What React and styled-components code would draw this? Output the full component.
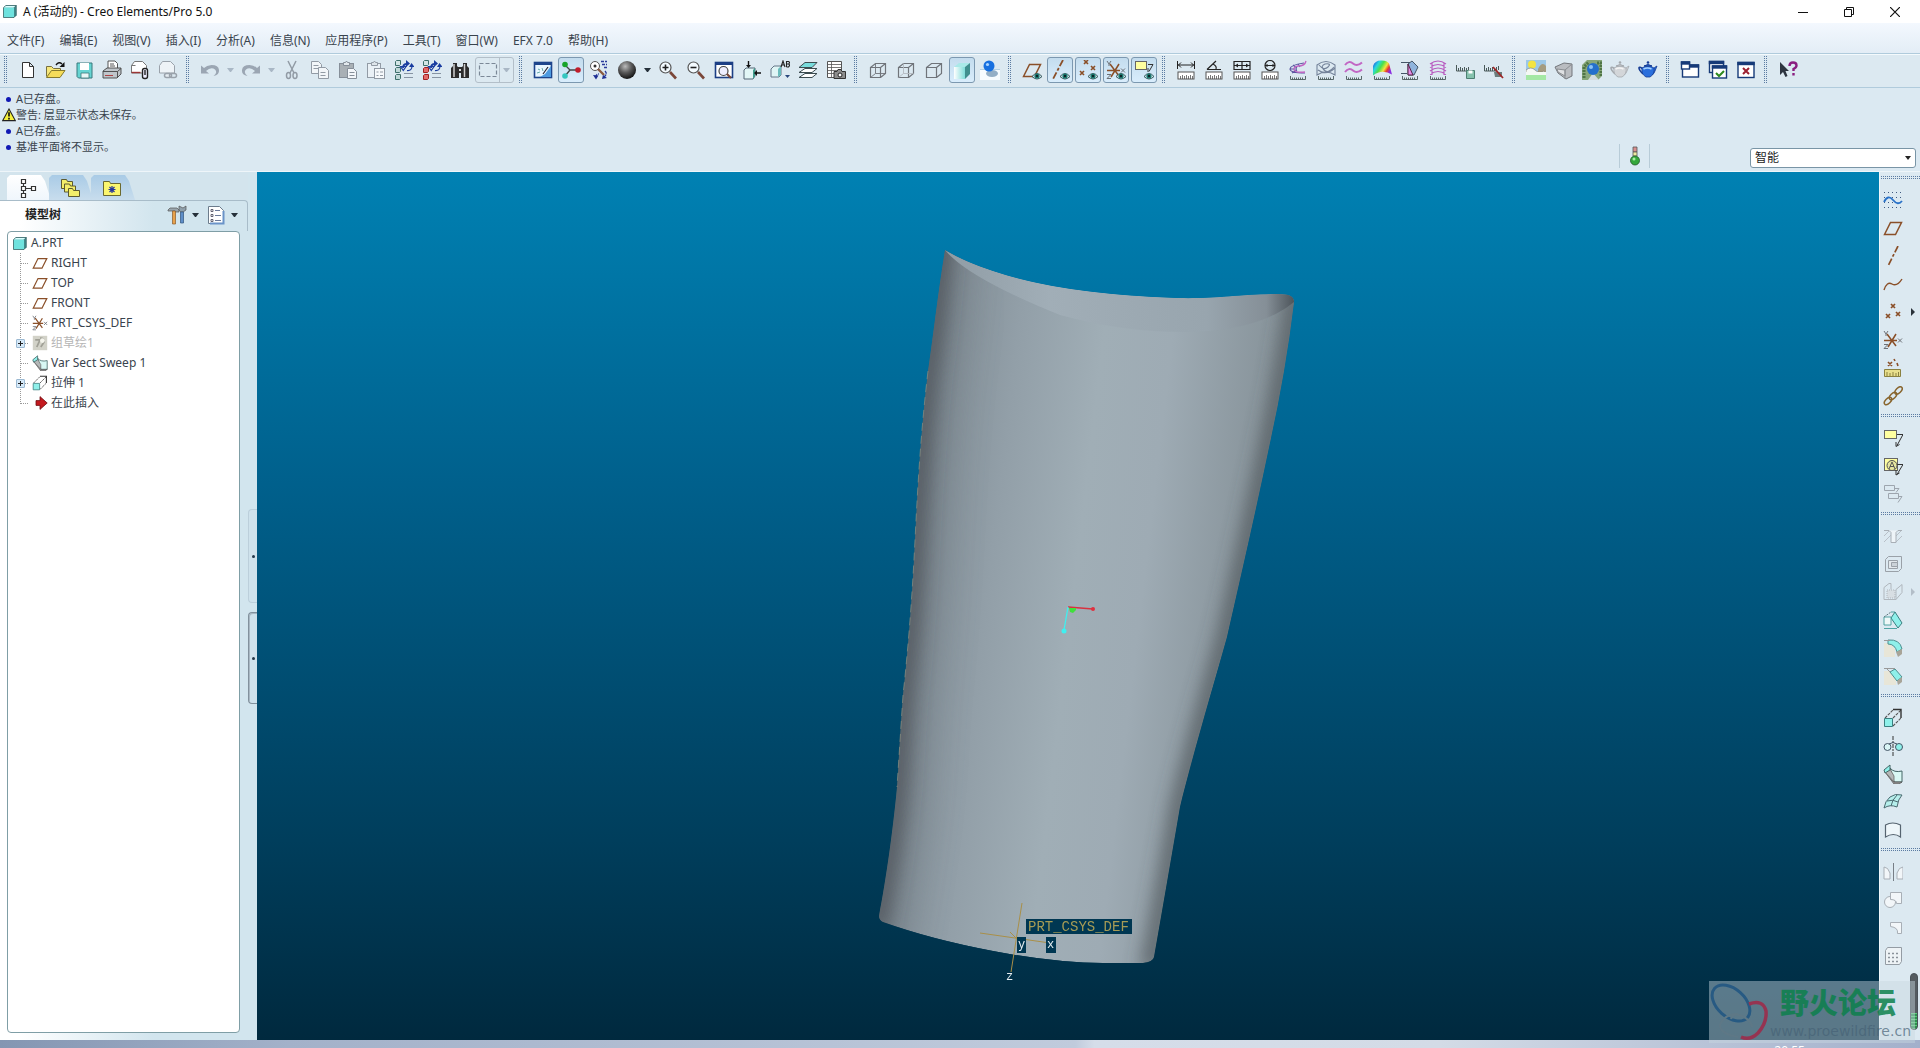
import React from "react";
import styled, { createGlobalStyle, css } from "styled-components";

const GlobalStyle = createGlobalStyle`
  * { box-sizing: border-box; }
  body {
    margin: 0;
    overflow: hidden;
    font: 12px/16px "Noto Sans", "Noto Sans CJK SC", sans-serif;
    color: #39434d;
    background: #dbe9f2;
  }
  button { font: inherit; color: inherit; }
`;

const BROWN = "#8a4f28";
const AQUA = "#8ff0ea";

const ruler = (
  <>
    <rect x="2" y="12" width="16" height="7" fill="#fff" stroke="#555" />
    <path d="M4.5 16v3M6.5 15v4M8.5 16v3M10.5 15v4M12.5 16v3M14.5 15v4M16.5 16v3" stroke="#555" strokeWidth=".8" />
  </>
);

const thinRuler = (
  <path d="M2.5 16v3.5h15V16M4.5 17.5v2M6.5 17.5v2M8.5 17.5v2M10.5 17.5v2M12.5 17.5v2M14.5 17.5v2" stroke="#4a5a5a" strokeWidth=".9" fill="none" />
);

const eye = (
  <g>
    <path d="M10 16.5q5-6 10 0q-5 5-10 0z" fill="#cfe4ea" stroke="#26484c" strokeWidth=".9" />
    <circle cx="15" cy="16" r="2.6" fill="#1c7a70" />
    <circle cx="15" cy="16" r="1.2" fill="#0d2226" />
  </g>
);

const cubeFrame = (color, inner) => (
  <g fill="none" stroke={color} strokeWidth="1.2">
    <path d="M2.5 7.5h10v10h-10zM2.5 7.5l5-4h10v10l-5 4M12.5 7.5l5-4" />
    {inner && <path d="M7.5 3.5v10h10M7.5 13.5l-5 4" stroke={inner} strokeWidth=".9" />}
  </g>
);

const treeList = (color) => (
  <g>
    {[0, 7, 14].map((y, i) => (
      <g key={y}>
        <path d={`M1.5 ${y + 1.5}l1-1h4v4l-1 1h-4z`} fill={i ? color : "#d3e6e6"} stroke={i && color === "#e26a6a" ? "#a02020" : "#3d6f6b"} />
      </g>
    ))}
    <path d="M10 13.5h9M10 17.5h9" stroke="#8794a3" strokeWidth="1.2" />
    <path d="M9 8q0-4 4-4" stroke="#1a3da0" strokeWidth="1.8" fill="none" />
    <path d="M12 0l4 3.5-4 3.500zM15 7l2.5-4 3 4z" fill="#1a3da0" />
    <path d="M6.5 6.500h5.500l-2.700 4zM18 6q0 5-5 4.500" stroke="#1a3da0" strokeWidth="1.2" fill="none" />
  </g>
);

const lens = (sign) => (
  <g>
    <path d="M12 12l6 6.5" stroke="#7a4638" strokeWidth="2.6" />
    <circle cx="7.5" cy="7.5" r="5.5" fill="#f4fbff" stroke="#555" strokeWidth="1.2" />
    <path d={sign} stroke="#222" strokeWidth="1.6" />
  </g>
);

const teapot = (fill, line, shine) => (
  <g>
    <path d="M5 9q-4-3-4-1t4 6" fill="none" stroke={line} strokeWidth="1.6" />
    <path d="M15 10q1-3 4-4l-2 5q-1 3-3 4z" fill={fill} stroke={line} strokeWidth=".8" />
    <path d="M4 8q6-4 12 0q1 6-4 9H8Q3 14 4 8z" fill={fill} stroke={line} strokeWidth=".8" />
    <path d="M6 6q4-3 8 0z" fill={fill} stroke={line} />
    <circle cx="10" cy="2.5" r="1.3" fill={line} />
    <path d="M5.5 9q4-2 8 0" stroke={shine} strokeWidth="1.5" fill="none" />
  </g>
);

const windowBox = (x, y, w, h) => (
  <g>
    <rect x={x} y={y} width={w} height={h} fill="#fff" stroke="#163a78" strokeWidth="1.4" />
    <rect x={x - 0.7} y={y - 0.7} width={w + 1.4} height="3.4" fill="#163a78" />
  </g>
);

const csys = (
  <g stroke={BROWN} strokeWidth="1.5" fill="none">
    <path d="M1 10.5h13M4 4l9 12M13 4L5 17" />
    <path d="M1 1l2 3 2-3M3 4v2M15 8.5l4 4M19 8.5l-4 4M1 14.5h4l-4 4h4" stroke="#6c7076" strokeWidth="1" />
  </g>
);

const note = (
  <g>
    <rect x="1.5" y="2.5" width="12" height="8" fill="#ffffa0" stroke="#666" />
    <path d="M14 6.5h6l-6 11M13 14v4.5l3.5-2" stroke="#333" fill="none" />
  </g>
);

const plane = <path d="M1.5 16.5l6-12h11l-6 12z" fill="none" stroke={BROWN} strokeWidth="1.5" />;

const ICONS = {
  app: (
    <g>
      <path d="M2 5l3-3h14v13l-3 3z" fill="#3f8a8b" />
      <path d="M2 5l3-3h14l-3 3z" fill="#d9ffff" />
      <path d="M2 5h14v13H2z" fill="#6fe2de" />
      <path d="M2 5l3-3h14v13l-3 3H2zM16 5l3-3" fill="none" stroke="#2c5a5c" strokeWidth="1" />
    </g>
  ),
  newFile: <path d="M4.5 2.5h7l4 4v11h-11zM11.5 2.5v4h4" fill="#fff" stroke="#333" />,
  open: (
    <g>
      <path d="M.5 16.5v-10h5l2 2h7v2" fill="#f7e77a" stroke="#777040" />
      <path d="M.5 17.5l5-7h13.5l-5 7z" fill="#f5dc59" stroke="#857a2c" />
      <path d="M10 5q3-4 6-1" fill="none" stroke="#111" strokeWidth="1.4" />
      <path d="M18.5 2v5h-5z" fill="#111" />
    </g>
  ),
  save: (
    <g>
      <path d="M3 3h15v15H4.5L3 16.5z" fill="#66d4d2" stroke="#39797c" />
      <path d="M6 3h9v7H6z" fill="#fff" />
      <path d="M7 13h8v5H7z" fill="#e8f6f6" stroke="#39797c" strokeWidth=".8" />
    </g>
  ),
  print: (
    <g stroke="#444" strokeWidth=".9">
      <path d="M6 9V1h7l2.5 2.5V9z" fill="#fff" />
      <path d="M8 4h4M8 6h5" />
      <path d="M1 11l4-3h14v6l-4 4H1z" fill="#bfc5ca" />
      <path d="M1 11.5h14.5v6M15.5 11.5l3.5-3" fill="none" />
      <path d="M3 15.5h8" stroke="#a33" />
    </g>
  ),
  mail: (
    <g>
      <path d="M1.5 13V5.500l3-4h8l4 4V13z" fill="#fff" stroke="#777" />
      <path d="M1.500 5.500h4" stroke="#777" />
      <path d="M1.5 12.500h9" stroke="#9c3636" strokeWidth="1.400" />
      <rect x="12.500" y="8.500" width="5" height="10" rx="2" fill="#eef" stroke="#222" strokeWidth="1.400" />
      <path d="M15 10v5" stroke="#222" strokeWidth="1.400" />
    </g>
  ),
  mailLink: (
    <g fill="none" stroke="#9aa2ab">
      <path d="M1.5 13V5.500l3-4h8l4 4V13z" fill="#eef3f7" />
      <rect x="6.5" y="13.5" width="7" height="4" rx="2" strokeWidth="1.5" fill="#e6edf2" />
      <rect x="11.5" y="13.5" width="7" height="4" rx="2" strokeWidth="1.5" />
    </g>
  ),
  undo: <path d="M1 5.500v8h8l-3-2.500q5-4.500 9-1.500 3 3-1.500 6.500 6-1 5.500-6-.5-5-7.500-5-5 .5-7.500 3z" fill="#9ba6b3" />,
  redo: <path d="M19 5.500v8h-8l3-2.500q-5-4.500-9-1.500-3 3 1.500 6.500-6-1-5.500-6 .5-5 7.500-5 5 .5 7.500 3z" fill="#9ba6b3" />,
  cut: (
    <g fill="none" stroke="#929ba5" strokeWidth="1.5">
      <path d="M6 1l6 12M14 1L8 13" />
      <ellipse cx="6.5" cy="15.5" rx="2" ry="3" />
      <ellipse cx="13" cy="15.5" rx="2" ry="3" />
    </g>
  ),
  copy: (
    <g fill="#f2f6f9" stroke="#929ba5">
      <path d="M1.5 1.5h7l3 3v9h-10z" />
      <path d="M3.5 5.5h5M3.5 8.5h5" />
      <path d="M8.5 7.5h7l3 3v8h-10zM10.5 12.5h5M10.5 15.5h5" />
    </g>
  ),
  paste: (
    <g stroke="#868f99">
      <rect x="1.5" y="3.5" width="14" height="14" fill="#a9b0b5" />
      <path d="M5.5 5.5v-3h2l1-1.5 1 1.5h2v3z" fill="#e2e8ec" />
      <path d="M9.5 8.5h6l3 3v7h-9zM11.5 12.5h5M11.5 15.5h5" fill="#f4f7fa" />
    </g>
  ),
  pasteSpecial: (
    <g stroke="#929ba5">
      <rect x="1.5" y="3.5" width="13" height="14" fill="#eaf1f6" />
      <path d="M5.5 5.5v-3h2l1-1.5 1 1.5h2v3z" fill="#dfe6eb" />
      <rect x="8.5" y="8.5" width="10" height="10" fill="#f6f9fb" />
      <path d="M10.5 12h2M14 12h3M10.5 15.5h2M14 15.5h3" />
    </g>
  ),
  regen: treeList("#bfd8d8"),
  regenFix: treeList("#e26a6a"),
  find: (
    <g fill="#2b2b2b">
      <path d="M3 3h4v3l2 2v10H1V8l2-2zM13 3h4v3l2 2v10h-8V8l2-2z" />
      <rect x="7" y="7" width="6" height="6" />
      <path d="M4 4v13M14.5 4v13" stroke="#cfcfcf" strokeWidth="1.5" />
      <path d="M9 9l2 2M11 9l-2 2" stroke="#ddd" />
    </g>
  ),
  marquee: <rect x="1.5" y="3.5" width="17" height="13" fill="none" stroke="#7b8897" strokeWidth="1.2" strokeDasharray="4 2" />,
  repaint: (
    <g>
      <rect x="1.5" y="2.5" width="17" height="15" fill="#e9f6ff" stroke="#1e458c" strokeWidth="1.6" />
      <path d="M1 2h18v3H1z" fill="#1e458c" />
      <path d="M18 17V6l-6 8-5 3z" fill="#4d9ae0" />
      <path d="M5 9l2 1M4 13l3-1M9 8l1 3" stroke="#6aa" />
      <path d="M15 7l-5 7" stroke="#223" strokeWidth="1.2" />
    </g>
  ),
  spin: (
    <g>
      <path d="M4 5l5 5-5 6M9 10h8" stroke="#444" strokeWidth="1.4" fill="none" />
      <circle cx="4" cy="4.5" r="2.8" fill="#17a32a" />
      <circle cx="4" cy="16" r="2.8" fill="#35c6c0" />
      <circle cx="17" cy="10" r="2.8" fill="#c01d2c" />
    </g>
  ),
  orient: (
    <g fill="none">
      <circle cx="6" cy="6" r="4.5" stroke="#555" fill="#fff" />
      <circle cx="6" cy="6" r="1.5" fill="#333" />
      <path d="M9 9l6 6" stroke="#8a5a40" strokeWidth="2.4" />
      <path d="M12 1.5h6M13 4.5h5M15 7.500h3M7 17q0-3 3-3M16 11q3 3-1 6" stroke="#2a3a9a" strokeWidth="1.4" strokeDasharray="3 1" />
      <path d="M4 15l3 4.500 2.500-4zM13 19l5-1-4-3z" fill="#1e2f94" />
    </g>
  ),
  shade: (
    <g>
      <defs>
        <radialGradient id="ball" cx=".4" cy=".3" r=".7">
          <stop offset="0" stopColor="#bbb" />
          <stop offset=".5" stopColor="#5a5a5a" />
          <stop offset="1" stopColor="#151515" />
        </radialGradient>
      </defs>
      <circle cx="10" cy="10" r="9" fill="url(#ball)" />
    </g>
  ),
  zoomIn: lens("M4.5 7.5h6M7.5 4.5v6"),
  zoomOut: lens("M4.5 7.5h6"),
  refit: (
    <g>
      <rect x="1.5" y="2.5" width="17" height="15" fill="#fff" stroke="#1c3f85" strokeWidth="1.6" />
      <path d="M1 2h18v3H1z" fill="#1c3f85" />
      <circle cx="9.5" cy="11" r="4.5" fill="#eef" stroke="#444" strokeWidth="1.2" />
      <path d="M13 14l4 4" stroke="#7a4638" strokeWidth="2.2" />
    </g>
  ),
  viewMgr: (
    <g>
      <path d="M2 10l2-2h9v8l-2 3H2z" fill="#e2f6f6" stroke="#567" />
      <path d="M11 10l2-2v8l-2 3z" fill="#3f9d8d" />
      <path d="M6.5 1v5M19 13h-5" stroke="#111" strokeWidth="1.4" />
      <path d="M4 5h5l-2.5 3zM15 10v6l-3-3z" fill="#111" />
    </g>
  ),
  named: (
    <g>
      <path d="M1 9l3-3h7v9l-2 2H1z" fill="#dff5f5" stroke="#678" />
      <path d="M8 9v8l3-2V6z" fill="#6bbcbc" />
      <path d="M11 7l2-6 2 6M12 5h2M16.5 1v6M16.5 1.5h2q2 1 0 2.5h-2M18.5 4q2 1 0 3h-2" stroke="#222" strokeWidth="1.1" fill="none" />
      <path d="M15 15h5l-2.500 3z" fill="#28467c" />
    </g>
  ),
  layers: (
    <g stroke="#3c4c50" fill="#fff">
      <path d="M1 17.5l6-4h12l-5 4z" />
      <path d="M1 12.5l6-4h12l-5 4z" />
      <path d="M1 7.5l6-5h12l-5 5z" fill="#79dcdc" />
    </g>
  ),
  capture: (
    <g stroke="#555">
      <path d="M1.5 1.5h14v16h-14z" fill="#fff" />
      <path d="M1.5 4.5h14M1.5 7.5h14M1.5 10.5h14M1.5 13.5h14M5.5 1.5v16" strokeWidth=".8" />
      <path d="M8 11.5h3l1-2h3l1 2h3.5v7H8z" fill="#8d8d8d" stroke="#333" />
      <circle cx="14" cy="15" r="2" fill="#fff" stroke="#222" />
    </g>
  ),
  wire: cubeFrame("#70747a", "#70747a"),
  hidden: cubeFrame("#70747a", "#b3b9c0"),
  noHidden: cubeFrame("#70747a"),
  shaded: (
    <g>
      <defs>
        <linearGradient id="cube" x1="0" x2="1">
          <stop offset="0" stopColor="#fff" />
          <stop offset="1" stopColor="#7fdcda" />
        </linearGradient>
      </defs>
      <path d="M2 7l5-4h11l-5 4z" fill="#a9e9e8" />
      <path d="M13 7l5-4v11l-5 5z" fill="#3f8e8e" />
      <path d="M2 7h11v12H2z" fill="url(#cube)" />
    </g>
  ),
  enhanced: (
    <g>
      <path d="M0 10h20v10H0z" fill="#f6fbff" />
      <path d="M0 9.5h20" stroke="#b4cfe2" />
      <ellipse cx="12" cy="13.5" rx="6" ry="3.5" fill="#93aec6" />
      <circle cx="9" cy="6" r="5.5" fill="#1870e0" />
      <circle cx="7.5" cy="4.5" r="1.6" fill="#a9d4ff" />
    </g>
  ),
  planeEye: <g>{plane}{eye}</g>,
  axisEye: <g><path d="M13 0L3 19" stroke={BROWN} strokeWidth="1.8" strokeDasharray="7 2 3 2" />{eye}</g>,
  pointEye: (
    <g>
      <path d="M6 0l4 4M10 0L6 4M13 6l4 4M17 6l-4 4M2 11l4 4M6 11l-4 4" stroke={BROWN} strokeWidth="1.6" />
      {eye}
    </g>
  ),
  csysEye: <g>{csys}{eye}</g>,
  noteEye: (
    <g>
      <rect x="1.5" y="1.5" width="11" height="8" fill="#ffffa0" stroke="#666" />
      <path d="M14 4.5h5l-4 7M14 8v4" stroke="#333" fill="none" />
      {eye}
    </g>
  ),
  mDistance: <g>{ruler}<path d="M1.5 1v8M18.5 1v8M2 5h16M5 2.5L2.5 5 5 7.5M15 2.5L17.5 5 15 7.5" stroke="#222" fill="none" /></g>,
  mAngle: <g>{ruler}<path d="M3 9.5h14M3 9.5L12 1M9 4q4 2 3 5" stroke="#222" strokeWidth="1.2" fill="none" /></g>,
  mArea: <g>{ruler}<path d="M2 1.500h16v8H2zM2 5.500h16M10 1.500v8" stroke="#222" strokeWidth="1.200" /><path d="M6 3.500v4l-3-2zM14 3.500v4l3-2z" fill="#222" /></g>,
  mDiameter: <g>{ruler}<circle cx="10" cy="5.5" r="5" fill="none" stroke="#222" strokeWidth="1.2" /><path d="M5 5.5h10M7 4v3M13 4v3" stroke="#222" /></g>,
  aCurvature: (
    <g>
      {thinRuler}
      <path d="M16 3q-14 2-14 6 0 4 15 4M5 5l4 3M2 9h7M4 13l5-3M10 4l2 3" stroke="#5b55a0" strokeWidth="1.1" fill="none" />
      <path d="M18 1q-1 5-8 5-5 1-4 4 2 3 11 2" stroke="#c266c4" strokeWidth="1.300" fill="none" />
    </g>
  ),
  aSections: <g>{thinRuler}<path d="M1 15V5q9-7 18 0v10q-9-6-18 0zM3 5q5 6 9 2t-3-3q-5 2-1 6t10-3M2 10q8 6 17-2" stroke="#74839a" strokeWidth="1.1" fill="none" /></g>,
  aOffset: <g>{thinRuler}<path d="M1 5q4-5 8-1.500t9-1M1 12q4-5 8-1.500t9-1" stroke="#c266c4" strokeWidth="2" fill="none" /></g>,
  aShaded: (
    <g>
      {thinRuler}
      <defs>
        <linearGradient id="rainbow" x1="0" y1="0" x2="1" y2=".5">
          <stop offset="0" stopColor="#1a35df" />
          <stop offset=".3" stopColor="#28d6df" />
          <stop offset=".5" stopColor="#4be04a" />
          <stop offset=".7" stopColor="#f4e63e" />
          <stop offset=".85" stopColor="#e8392e" />
          <stop offset="1" stopColor="#8a2de0" />
        </linearGradient>
      </defs>
      <path d="M1 6q2-6 9-5.500 5 0 7 3l3 11q-10-6-19 1z" fill="url(#rainbow)" />
    </g>
  ),
  aDraft: <g>{thinRuler}<path d="M8 4l4-3 6 6-4 8H8z" fill="#8fb4dc" stroke="#456" /><path d="M8 4l5 11H8z" fill="#e68be6" stroke="#524" /><path d="M1 2.5h9M1 13.5h6" stroke="#456" /></g>,
  aSlope: <g>{thinRuler}<path d="M2 4q8-6 16 0M2 7.5q8-6 16 0M2 11q8-6 16 0M2 14.5q8-6 16 0M4 3v12M16 3v12" stroke="#b85cc0" strokeWidth="1.2" fill="none" /></g>,
  aSaved: (
    <g>
      <path d="M.5 5v6h13M2.5 8v3M4.5 7v4M6.5 8v3M8.5 7v4M10.5 8v3M12.5 7v4" stroke="#4a5a5a" fill="none" />
      <path d="M10.5 10.5h8v8h-8z" fill="#86c2ad" stroke="#4d7f72" />
      <path d="M12.5 10.5h4v3h-4z" fill="#fff" />
    </g>
  ),
  aHide: (
    <g>
      <path d="M.5 5v6h13M2.5 8v3M4.5 7v4M6.5 8v3M8.5 7v4M10.5 8v3M12.5 7v4M14.5 6v4" stroke="#4a5a5a" fill="none" />
      <path d="M10 12h8v5h-7z" fill="#6d7d7d" />
      <path d="M9 7l10 11" stroke="#a02626" strokeWidth="1.8" />
    </g>
  ),
  scene: (
    <g>
      <path d="M0 0h20v12H0z" fill="#9cc8e8" />
      <circle cx="6" cy="4.5" r="4" fill="#f2e443" />
      <path d="M12 9q4-8 8-3v6h-8z" fill="#a49c80" />
      <path d="M0 10q5-4 9 0t9 1l2 2H0z" fill="#f4f8f4" stroke="#776" strokeWidth=".6" />
      <path d="M0 12h20v3H0z" fill="#f4f8f4" />
      <path d="M0 15h20v5H0z" fill="#a4e8a4" />
    </g>
  ),
  perspective: <g><path d="M1 7l9-4 8 1v12l-6 3-8-6z" fill="#b9bcc0" stroke="#73777c" /><path d="M3 9l8 1v6l-7-4zM11 10l7-6M11 10v9" fill="#dfe1e3" stroke="#8a8e92" /></g>,
  render: (
    <g>
      <path d="M0 5l5-5h15v16l-4 4H0z" fill="#87a77a" />
      <path d="M2 18V7l5-5M15 3h4v13" stroke="#4f7546" strokeWidth="3" fill="none" strokeDasharray="2 1" />
      <path d="M6 20l5-7 6 7z" fill="#d5dde0" />
      <circle cx="11" cy="9" r="6" fill="#2470cc" />
      <circle cx="9" cy="7" r="2" fill="#8cc3f5" />
    </g>
  ),
  potGrey: teapot("#d3d6d9", "#a4a9ae", "#f4f4f4"),
  potBlue: teapot("#2b6fdc", "#153c94", "#a4d2ff"),
  winNew: <g>{windowBox(2.5, 5, 16, 12)}{windowBox(1.5, 2, 8, 7)}</g>,
  winActive: <g>{windowBox(1.5, 1.5, 14, 11)}{windowBox(4.5, 6, 14, 12)}<path d="M8 13l3 3 5-5" stroke="#2f8a1f" strokeWidth="2" fill="none" /></g>,
  winClose: <g>{windowBox(2, 2.5, 16, 15)}<path d="M7 8l6 6M13 8l-6 6" stroke="#9c2031" strokeWidth="2" /></g>,
  help: (
    <g>
      <path d="M2 2v13l3-3 2.5 5 2-1L7.5 11H11z" fill="#2d3540" />
      <path d="M11.5 6q0-3.5 3.5-3.5t3.5 3q0 2-3 3.5v2M15.5 13v2.5" stroke="#8a1e80" strokeWidth="2.4" fill="none" />
    </g>
  ),

  // feature bar
  sketch: (
    <g>
      <path d="M1 2.5h18M1 7.5h18M1 12.5h18M1 17.5h18" stroke="#3f5a80" strokeDasharray="1 3" />
      <path d="M1 12q4-8 9-2t9 1" stroke="#2a72c8" strokeWidth="1.8" fill="none" />
    </g>
  ),
  plane,
  axis: <path d="M15 0L5 20" stroke={BROWN} strokeWidth="1.7" strokeDasharray="7 2 3 2" />,
  curve: <path d="M1 16q3-9 8-6t10-5" stroke={BROWN} strokeWidth="1.4" fill="none" />,
  points: <path d="M8 2l4 4M12 2L8 6M13 10l4 4M17 10l-4 4M3 12l4 4M7 12l-4 4" stroke={BROWN} strokeWidth="1.7" />,
  csys,
  analysisPt: (
    <g>
      <path d="M5 4l4 4M9 4L5 8M11 1l1 2M14 5l1 3" stroke={BROWN} strokeWidth="1.6" />
      <path d="M1.5 11.5h16v7h-16z" fill="#e8df8c" stroke="#8a8140" />
      <path d="M4 14v4M7 15v3M10 14v4M13 15v3M15.500 14v4" stroke="#8a8140" />
    </g>
  ),
  chain: (
    <g fill="none" stroke="#88652e" strokeWidth="1.5">
      <ellipse cx="5" cy="15" rx="4.500" ry="2.5" transform="rotate(-45 5 15)" />
      <ellipse cx="10" cy="10" rx="4.500" ry="2.5" transform="rotate(-45 10 10)" />
      <ellipse cx="15.5" cy="4.5" rx="4.500" ry="2.5" transform="rotate(-45 15.5 4.5)" />
    </g>
  ),
  note,
  noteSym: <g><rect x="1.5" y="2.5" width="13" height="12" fill="#ffffa0" stroke="#666" /><path d="M14 8.500h6l-6 10M13 14v5l3.500-2" stroke="#333" fill="none" /><circle cx="9" cy="9.500" r="5" fill="#e6e6a0" stroke="#555" /><path d="M9 6l-3 7M9 6l3 7M7 10.500h4" stroke="#555" fill="none" /></g>,
  notes: <path d="M1.5 1.5h10v5h-10zM5.5 9.5h10v5h-10zM12 4.5h4l-3 4M16 12.5h3l-4 6" stroke="#9da5ae" fill="none" />,
  hole: <g stroke="#a8afb6" fill="none"><path d="M1 4.5h5l2 2v10h5v-10l2-2h4" fill="#eef4f8" /><path d="M1 10l5-5M1 16l7-7M13 16l6-6M13 10l5-5" strokeWidth=".7" /></g>,
  shell: <g stroke="#9aa1a8" fill="none"><path d="M2.5 5.5l3-3h13v12l-3 3h-13z" /><path d="M5.5 6.5h9v8h-9z" fill="#e2e8ec" /><path d="M8.5 8.5h6v4h-6z" fill="#cbd2d8" /></g>,
  rib: <g stroke="#b0b7bd" fill="none"><path d="M1 5.5l5-4h2v6M1 5.5v12h12l6-7v-8l-6 5v10" /><path d="M4 8h8v8H4z" fill="#d7dee3" strokeDasharray="1 1" /></g>,
  draft: <g><path d="M12 2l7 11-4 5-7-10z" fill={AQUA} stroke="#3b7f80" /><path d="M1 7h7v8H1zM8 2h4M1 18.500h13" fill="#eef8f8" stroke="#3f9a9a" strokeWidth=".9" /><path d="M1 7l7-5" stroke="#607a80" strokeDasharray="2 1" /></g>,
  round: <g><path d="M1 5h6l5 6v8H1z" fill="#e8e6d8" /><path d="M5 2q12-1 14 9l-5 3Q12 6 5 6z" fill={AQUA} stroke="#4c8f90" /><path d="M13 14l6-3v5l-4 3z" fill="#a8a498" /><path d="M1 2.5h6" stroke="#999" /></g>,
  chamfer: <g><path d="M1 5h6l6 8v6H1z" fill="#e8e6d8" /><path d="M7 6l5-3 7 8-5 4z" fill={AQUA} stroke="#4c8f90" /><path d="M14 15l5-4v5l-4 3z" fill="#a8a498" /><path d="M1 2.5h11M7 6L4 3" stroke="#999" /></g>,
  extrude: (
    <g>
      <path d="M2 10l8-8M10 10l8-8M10 18l8-8" stroke="#555" strokeWidth="1.1" strokeDasharray="3 1" />
      <path d="M10 1.500h8V10" stroke="#333" strokeWidth="1.4" fill="none" />
      <path d="M1.5 10.5h8v8h-8z" fill={AQUA} stroke="#3b7f80" />
    </g>
  ),
  revolve: (
    <g>
      <path d="M10 0v20" stroke="#333" strokeDasharray="4 1 2 1" />
      <circle cx="4.5" cy="11" r="3.5" fill="#d9f5f5" stroke="#456" />
      <circle cx="16" cy="11" r="3.5" fill={AQUA} stroke="#456" />
      <path d="M6 8q4-3 8 0" stroke="#456" fill="none" />
    </g>
  ),
  sweep: (
    <g>
      <path d="M7 4q4 5 12 3v11h-8z" fill="#d9f8f4" stroke="#466" />
      <path d="M2 8l5 0 4 10 8 0-3 2h-5z" fill="#9b9b9b" stroke="#555" strokeWidth=".8" />
      <path d="M2 8l9 10V12L7 5z" fill="#b4b8b8" stroke="#666" strokeWidth=".8" />
      <path d="M1 6l6-5v5L2 9z" fill={AQUA} stroke="#466" />
    </g>
  ),
  blend: <g fill="#b6efec" stroke="#4a6a70"><path d="M1 16q1-7 6-11 5-4 12-2-4 4-5 12-7-3-13 1z" /><path d="M8 14q1-6 6-11M4 9q6-2 11 1" fill="none" /></g>,
  boundary: <path d="M2.5 5q7-4 15 0v12q-7-5-15 0z" fill="#eef6fa" stroke="#566470" strokeWidth="1.2" />,
  mirror: <g fill="#f2f6f9" stroke="#a8afb6"><path d="M10.5 1v18" stroke="#777e86" /><path d="M1 17V5q4 0 6 6v6zM20 17V5q-4 0-6 6v6z" /></g>,
  merge: <g fill="#f2f6f9" stroke="#a8afb6"><circle cx="7" cy="12" r="5.5" /><path d="M7.5 2.5h11v11h-5q0-4-6-4z" /></g>,
  trim: <path d="M7.5 4.5h11v11h-4q1-6-7-7z" fill="#f2f6f9" stroke="#a8afb6" />,
  pattern: (
    <g>
      <path d="M2.5 4.5l2-3h14v14l-2 3h-14z" fill="#eef3f6" stroke="#949ca4" />
      <path d="M5 7.5h11M5 11.5h11M5 15.5h11" stroke="#8a929a" strokeWidth="1.5" strokeDasharray="2 2" />
    </g>
  ),

  // model tree
  tabTree: <path d="M3.5 1.5h4v4h-4zM3.5 8.5h4v4h-4zM3.5 15.5h4v4h-4zM13.5 8.5h4v4h-4zM7.5 10.5h6M5.5 5.5v3M5.5 12.5v3" fill="#fff" stroke="#333" strokeWidth="1.2" />,
  tabFolders: (
    <g fill="#f2ee6a" stroke="#5c5a30">
      <path d="M1.5 1.5h5l1 2h5v7h-11z" />
      <path d="M4.5 6h5l1 2h5v6h-11z" />
      <path d="M8.5 10.5h4l1 2h6v6h-11z" />
    </g>
  ),
  tabFav: <g><path d="M1.5 3.5h6l1 2h10v12h-17z" fill="#fbf66f" stroke="#6b6930" /><path d="M10 8v7M6.5 11.5h7M7.5 9l5 5M12.5 9l-5 5" stroke="#24359a" strokeWidth="1.2" /></g>,
  tools: (
    <g>
      <path d="M1 5l2-2h7l2 2v2H8V6H1z" fill="#9aa6ae" stroke="#555" strokeWidth=".7" />
      <path d="M5.5 6h3v13h-3z" fill="#e8a24c" stroke="#8a5a2a" strokeWidth=".7" />
      <path d="M12 1v4l2 2h2l3-2V1l-3 2z" fill="#8fa0ac" stroke="#555" strokeWidth=".7" />
      <path d="M13.5 7h3v11h-3z" fill="#5f8fc9" stroke="#31537c" strokeWidth=".7" />
    </g>
  ),
  settings: (
    <g>
      <path d="M2.5 1.5h11l4 4v13h-15z" fill="#fff" stroke="#6c7c8c" />
      <path d="M9 5.5h5M9 10.5h6M9 15.5h6" stroke="#6a7a9a" />
      <path d="M5 4.5h2v2H5zM5 9.5h2v2H5zM5 14.5h2v2H5z" fill="none" stroke="#445" strokeWidth=".8" />
      <path d="M4 18.5h13.5V6" stroke="#6a93c8" strokeWidth="2" fill="none" />
    </g>
  ),
  group: <g><rect x="1" y="1" width="18" height="18" fill="#d2d2c8" /><path d="M4 6h6l-4 9M10 4q6 0 5 5l-4 6" stroke="#a0a096" strokeWidth="2.2" fill="none" /><circle cx="13" cy="7" r="3" fill="#f4f4ec" /></g>,
  insert: <path d="M5 7h5V2l9 8-9 8v-5H5z" fill="#c41a1f" stroke="#701015" />,
  warning: <g><path d="M10 1.5L19 18H1z" fill="#f6f13c" stroke="#222" strokeWidth="1.6" /><path d="M10 6v6M10 14v2.5" stroke="#111" strokeWidth="2.4" /></g>,
  light: (
    <g stroke="#555" strokeWidth=".8">
      <path d="M8 1h4v5H8z" fill="#d98f8f" />
      <path d="M8 6h4v4H8z" fill="#eeeaa0" />
      <circle cx="10" cy="14.5" r="4.5" fill="#35a83c" stroke="#23582a" />
      <circle cx="9" cy="13" r="1.5" fill="#a8eda6" stroke="none" />
    </g>
  ),
};

const Svg = styled.svg`
  display: block;
  flex: none;
  width: ${(p) => p.$size}px;
  height: ${(p) => p.$size}px;
`;

const Icon = ({ name, size = 20 }) => (
  <Svg $size={size} viewBox="0 0 20 20" fill="none" aria-hidden="true">
    {ICONS[name]}
  </Svg>
);

const Page = styled.div`
  position: relative;
  display: flex;
  flex-direction: column;
  min-height: 100vh;
`;

const TitleBar = styled.header`
  display: flex;
  align-items: center;
  height: 23px;
  padding-left: 2px;
  gap: 6px;
  background: #fff;
  color: #111;
`;

const WindowButtons = styled.div`
  display: flex;
  margin-left: auto;
  padding-right: 2px;
`;

const WindowButton = styled.button`
  display: grid;
  place-items: center;
  width: 46px;
  height: 22px;
  padding: 0;
  border: 0;
  background: none;
`;

const MenuBar = styled.nav`
  display: flex;
  align-items: center;
  height: 30px;
  padding: 6px 7px 0;
  gap: 15px;
  background: linear-gradient(#f3f8fe, #e3edf6);
`;

const MenuItem = styled.button`
  padding: 0;
  border: 0;
  background: none;
  white-space: nowrap;
`;

const ToolBar = styled.div`
  display: flex;
  align-items: center;
  height: 35px;
  padding-bottom: 2px;
  border-top: 1px solid #b0cbdc;
  border-bottom: 1px solid #b0cbdc;
  box-shadow: inset 0 1px #f4fafd, 0 1px #f4fafd;
  background: #dce9f1;
`;

const dots = css`
  background:
    linear-gradient(transparent 1px, #dce9f1 1px) 0 0 / 2px 2px,
    linear-gradient(90deg, #5b7ba2 1px, transparent 1px) 0 0 / 2px 2px;
`;

const Grip = styled.span`
  ${dots}
  flex: none;
  width: 3px;
  height: 27px;
  margin: 0 7px 0 4px;
`;

const ToolButton = styled.button`
  display: grid;
  place-items: center;
  flex: none;
  width: 26px;
  height: 26px;
  margin: 0 1px;
  padding: 0;
  border: 1px solid ${(p) => (p.$on ? "#7c98b0" : "transparent")};
  border-radius: 3px;
  background: ${(p) => (p.$on ? "linear-gradient(#c3dcee, #d9edfc)" : "none")};
`;

const ArrowButton = styled.button`
  flex: none;
  width: 13px;
  height: 26px;
  padding: 0 3px;
  border: 0;
  background: none;
  &::before {
    content: "";
    display: block;
    border: solid transparent;
    border-width: 4px 3px 0;
    border-top-color: ${(p) => (p.$dim ? "#a9b7c5" : "#26303a")};
  }
`;

const SelectBox = styled.div`
  display: flex;
  align-items: center;
  flex: none;
  width: 39px;
  height: 26px;
  margin: 0 1px;
  border: 1px solid #b3bfc9;
  border-radius: 3px;
  ${ToolButton} {
    width: 24px;
    height: 24px;
    margin: 0;
    border-width: 0 1px 0 0;
    border-radius: 0;
    border-right-color: #b3bfc9;
  }
`;

const MessageArea = styled.section`
  display: flex;
  align-items: flex-end;
  height: 84px;
  padding-right: 4px;
  background: #dbe9f2;
  border-bottom: 1px solid #eef5f9;
`;

const Messages = styled.ul`
  flex: 1;
  align-self: flex-start;
  margin: 0;
  padding: 3px 0 0 2px;
  list-style: none;
  font-size: 11px;
  li {
    display: flex;
    align-items: center;
    height: 16px;
  }
`;

const Bullet = styled.span`
  width: 5px;
  height: 5px;
  margin: 0 5px 0 4px;
  border-radius: 50%;
  background: #1018b4;
`;

const Status = styled.div`
  display: grid;
  place-items: center;
  width: 31px;
  height: 24px;
  margin: 0 100px 3px 0;
  border: solid #b8ccd8;
  border-width: 0 1px;
`;

const FilterSelect = styled.select`
  width: 166px;
  height: 20px;
  margin-bottom: 3px;
  padding: 0 4px;
  appearance: none;
  border: 1px solid #7995a6;
  border-radius: 3px;
  color: #222;
  font: inherit;
  background: #fff
    url("data:image/svg+xml,%3Csvg xmlns='http://www.w3.org/2000/svg' width='6' height='4'%3E%3Cpath d='M0 0h6l-3 4z' fill='%23222'/%3E%3C/svg%3E")
    no-repeat right 4px center;
`;

const Workspace = styled.main`
  display: flex;
  flex: 1;
  min-height: 0;
`;

const SidePanel = styled.aside`
  display: flex;
  flex: none;
  width: 257px;
  background: linear-gradient(to right, #fff 20px, #d2e5ee 60%);
`;

const PanelMain = styled.div`
  display: flex;
  flex-direction: column;
  width: 248px;
`;

const Tabs = styled.div`
  display: flex;
  height: 28px;
  padding: 3px 0 0 7px;
  background: #d3e4ed;
`;

const Tab = styled.button`
  width: 44px;
  margin-right: -2px;
  padding: 0 0 0 11px;
  border: 0;
  background: ${(p) => (p.$active ? "linear-gradient(#fff, #eff6fc)" : "linear-gradient(#a9cbe6, #c8dded)")};
  clip-path: polygon(0 3px, 3px 0, 34px 0, 38px 6px, 44px 100%, 0 100%);
`;

const PanelHead = styled.div`
  display: flex;
  align-items: center;
  height: 31px;
  padding: 0 6px 2px 25px;
  border-top: 1px solid #a8bcc9;
  border-right: 1px solid #a8bcc9;
  border-top-right-radius: 4px;
  h2 {
    flex: 1;
    margin: 0;
    font-size: 12px;
    color: #222;
  }
  ${ArrowButton} { margin-left: -2px; }
`;

const Tree = styled.ul`
  flex: 1;
  margin: 0 8px 7px 7px;
  padding: 1px 0 0 4px;
  list-style: none;
  border: 1px solid #7f9ea6;
  border-radius: 4px;
  background: #fff;
`;

const Row = styled.li`
  display: flex;
  align-items: center;
  height: 20px;
  padding-left: ${(p) => (p.$root ? 0 : 1)}px;
  gap: ${(p) => (p.$root ? 4 : 3)}px;
  color: ${(p) => (p.$dim ? "#b5b5b5" : "#39434d")};
`;

const Branch = styled.span`
  display: grid;
  place-items: center start;
  width: 16px;
  height: 20px;
  padding-left: 3px;
  background:
    linear-gradient(90deg, #999 1px, transparent 1px) 0 10px / 2px 1px repeat-x,
    linear-gradient(#999 1px, transparent 1px) 7px 0 / 1px 2px repeat-y;
  clip-path: inset(0 0 ${(p) => (p.$last ? 9 : 0)}px ${(p) => (p.$plus ? 3 : 7)}px);
`;

const Expander = styled.button`
  width: 9px;
  height: 9px;
  padding: 0;
  border: 1px solid #9bb9d2;
  border-radius: 1px;
  background:
    linear-gradient(#222, #222) center / 5px 1px no-repeat,
    linear-gradient(#222, #222) center / 1px 5px no-repeat,
    #d6e9f8;
`;

const Handles = styled.div`
  display: flex;
  flex-direction: column;
  width: 9px;
  padding-top: 337px;
  gap: 9px;
`;

const Handle = styled.button`
  display: grid;
  place-items: center;
  height: ${(p) => (p.$on ? 92 : 94)}px;
  padding: 0;
  border: 1px solid ${(p) => (p.$on ? "#82919d" : "#bccfdb")};
  border-right: 0;
  border-radius: 4px 0 0 4px;
  background: #cfe2ec;
  box-shadow: ${(p) => (p.$on ? "inset 1px 1px #a9b8c3" : "none")};
  &::before {
    content: "";
    width: 3px;
    height: 3px;
    border-radius: 50%;
    background: #24384a;
  }
`;

const Viewport = styled.section`
  flex: 1;
  min-width: 0;
  background: linear-gradient(#0081b3, #00608c 36%, #003e5c 77%, #00293e);
  svg {
    display: block;
    width: 100%;
    height: 100%;
  }
`;

const FeatureBar = styled.aside`
  flex: none;
  width: 41px;
  background: #dce9f1;
  border-left: 1px solid #eef6fa;
`;

const FeatureRow = styled.div`
  display: flex;
  align-items: center;
  height: 28px;
  ${ToolButton} { margin: 0; }
`;

const FlyOut = styled.button`
  width: 10px;
  height: 20px;
  padding: 0 0 0 5px;
  border: 0;
  background: none;
  &::before {
    content: "";
    display: block;
    border: solid transparent;
    border-width: 4px 0 4px 4px;
    border-left-color: ${(p) => (p.$dim ? "#b3bec8" : "#2a323a")};
  }
`;

const HGrip = styled.div`
  ${dots}
  height: 3px;
  margin: 4px 0 7px 1px;
`;

const TaskStrip = styled.footer`
  height: 8px;
  padding: 3px 115px 0 0;
  overflow: hidden;
  text-align: right;
  font-size: 12px;
  color: #fff;
  background: linear-gradient(to right, #8496b2, #a3b1c9 15%, #c0cbdc 56%, #d5dde9 57%, #d3dbe6 75%, #a3b0cb);
`;

const Meter = styled.div`
  position: absolute;
  right: 2px;
  bottom: 18px;
  width: 8px;
  height: 57px;
  border: 1px solid #4a5258;
  border-radius: 4px;
  background: repeating-linear-gradient(#5cc878 0 1px, #2f8f50 1px 3px) 0 100% / 100% 16px no-repeat, #555b60;
`;

const Watermark = styled.div`
  position: absolute;
  right: 5px;
  bottom: 5px;
  display: flex;
  width: 206px;
  height: 62px;
  background: rgba(200, 214, 224, 0.45);
  svg { flex: none; }
`;

const WatermarkText = styled.div`
  display: flex;
  flex-direction: column;
  align-items: flex-end;
  width: 144px;
  margin-left: -4px;
  white-space: nowrap;
  strong {
    margin-right: 15px;
    font: 900 29px/40px "Noto Sans CJK SC", sans-serif;
    color: rgba(12, 128, 76, 0.85);
  }
  span {
    font: 14px/20px "DejaVu Sans", sans-serif;
    color: rgba(70, 98, 118, 0.7);
  }
`;

const MENUS = ["文件(F)", "编辑(E)", "视图(V)", "插入(I)", "分析(A)", "信息(N)", "应用程序(P)", "工具(T)", "窗口(W)", "EFX 7.0", "帮助(H)"];

const TOOL_GROUPS = [
  ["newFile", "open", "save", "print", "mail", "mailLink"],
  ["undo", ">dim", "redo", ">dim", "cut", "copy", "paste", "pasteSpecial", "regen", "regenFix", "find", "select"],
  ["repaint", "spin", "orient", "shade", ">", "zoomIn", "zoomOut", "refit", "viewMgr", "named", "layers", "capture"],
  ["wire", "hidden", "noHidden", "shaded", "enhanced"],
  ["planeEye", "axisEye", "pointEye", "csysEye", "noteEye"],
  ["mDistance", "mAngle", "mArea", "mDiameter", "aCurvature", "aSections", "aOffset", "aShaded", "aDraft", "aSlope", "aSaved", "aHide"],
  ["scene", "perspective", "render", "potGrey", "potBlue"],
  ["winNew", "winActive", "winClose"],
  ["help"],
];

const PRESSED = ["spin", "shaded", "axisEye", "pointEye", "csysEye", "noteEye"];

const FEATURE_GROUPS = [
  ["sketch", "plane", "axis", "curve", "points", "csys", "analysisPt", "chain"],
  ["note", "noteSym", "notes"],
  ["hole", "shell", "rib", "draft", "round", "chamfer"],
  ["extrude", "revolve", "sweep", "blend", "boundary"],
  ["mirror", "merge", "trim", "pattern"],
];

const TREE = [
  { icon: "plane", label: "RIGHT" },
  { icon: "plane", label: "TOP" },
  { icon: "plane", label: "FRONT" },
  { icon: "csys", label: "PRT_CSYS_DEF" },
  { icon: "group", label: "组草绘1", expand: true, dim: true },
  { icon: "sweep", label: "Var Sect Sweep 1" },
  { icon: "extrude", label: "拉伸 1", expand: true },
  { icon: "insert", label: "在此插入" },
];

const Tool = ({ name }) => {
  if (name[0] === ">") return <ArrowButton $dim={name === ">dim"} aria-label="more" />;
  if (name === "select") {
    return (
      <SelectBox>
        <ToolButton aria-label="select"><Icon name="marquee" /></ToolButton>
        <ArrowButton $dim aria-label="more" />
      </SelectBox>
    );
  }
  return (
    <ToolButton $on={PRESSED.includes(name)} aria-label={name}>
      <Icon name={name} />
    </ToolButton>
  );
};

const LEFT_EDGE = "C938 292 934 330 928 371C921 430 918 480 915 540C912 600 908 650 903 695C899 750 899 760 897 787C893 830 886 880 ";

const BODY =
  `M945 250${LEFT_EDGE}879 916Q879 920 883 922Q930 939 993 951T1103 963H1143Q1153 962 1154 957Q1164 900 1180 807C1190 765 1212 690 1227 637C1240 580 1256 510 1270 443Q1286 370 1294 303Q1295 294 1280 294C1240 294 1220 299 1177 298Q1060 294 993 271Q965 262 945 250Z`;

const Model = () => (
  <svg viewBox="257 172 1622 868" preserveAspectRatio="xMidYMid slice" role="img" aria-label="A.PRT">
    <defs>
      <clipPath id="body"><path d={BODY} /></clipPath>
      <linearGradient id="skin" gradientUnits="userSpaceOnUse" x1="905" y1="560" x2="1245" y2="600">
        <stop offset="0" stopColor="#7f8b93" />
        <stop offset=".25" stopColor="#929fa8" />
        <stop offset=".5" stopColor="#a0aeb6" />
        <stop offset=".7" stopColor="#9eabb4" />
        <stop offset="1" stopColor="#87939a" />
      </linearGradient>
      <linearGradient id="inner" x1="0" x2="1">
        <stop offset="0" stopColor="#8f9ca5" />
        <stop offset=".3" stopColor="#a1aeb7" />
        <stop offset=".75" stopColor="#98a5ae" />
        <stop offset=".92" stopColor="#858f97" />
        <stop offset="1" stopColor="#4d555b" />
      </linearGradient>
      <filter id="soft" x="-50%" y="-10%" width="200%" height="120%"><feGaussianBlur stdDeviation="9" /></filter>
      <filter id="wide" x="-80%" y="-10%" width="260%" height="120%"><feGaussianBlur stdDeviation="22" /></filter>
    </defs>
    <g clipPath="url(#body)">
      <path d={BODY} fill="url(#skin)" />
      <path d={`M945 200${LEFT_EDGE}872 960`} fill="none" stroke="#5f686f" strokeWidth="44" opacity=".5" filter="url(#wide)" />
      <g fill="none" filter="url(#soft)">
        <path d={`M943 230${LEFT_EDGE}876 930`} stroke="#4c5257" strokeWidth="20" opacity=".8" />
        <path d="M1150 970Q1164 900 1180 807C1190 765 1212 690 1227 637C1240 580 1256 510 1270 443Q1286 370 1297 290" stroke="#4e5459" strokeWidth="18" opacity=".8" />
      </g>
      <path d="M945 250Q968 278 1060 315Q1125 333 1193 332Q1262 329 1294 302Q1296 294 1280 294C1240 294 1220 299 1177 298Q1060 294 993 271Q965 262 945 250Z" fill="url(#inner)" />
    </g>
    <path d="M928 371C921 430 918 480 915 540C912 600 908 650 903 695L897 787" fill="none" stroke="#8d8f80" strokeDasharray="8 5" opacity=".7" />
    <path d="M1068 607l25 2" stroke="#d8323f" strokeWidth="1.3" />
    <circle cx="1093" cy="609" r="2" fill="#e0303e" />
    <path d="M1068 607l-4 23" stroke="#3ff0f0" strokeWidth="1.3" />
    <circle cx="1064" cy="631" r="2.5" fill="#3ff0f0" />
    <path d="M1069 608h7v2l-3 3-3-1z" fill="#3fe03c" />
    <path d="M980 933L1050 943M1022 903L1011 972M1010 932l10 10" stroke="#a98f48" fill="none" />
    <path d="M1026 919h106v15h-106zM1017 937h9v16h-9zM1046 937h10v16h-10z" fill="#003752" />
    <g fontFamily="'Liberation Mono', monospace" fontSize="14">
      <text x="1028" y="931" fill="#a59b55">PRT_CSYS_DEF</text>
      <g fontSize="12" fill="#e6eef2">
        <text x="1018" y="948">y</text>
        <text x="1047" y="948">x</text>
        <text x="1006" y="980">z</text>
      </g>
    </g>
  </svg>
);

const App = () => (
  <>
    <GlobalStyle />
    <Page>
      <TitleBar>
        <Icon name="app" size={15} />
        <span>A (活动的) - Creo Elements/Pro 5.0</span>
        <WindowButtons>
          <WindowButton aria-label="minimize"><svg width="10" height="10"><path d="M0 5.5h10" stroke="#111" /></svg></WindowButton>
          <WindowButton aria-label="restore"><svg width="10" height="10"><path d="M.5 2.5h7v7h-7zM2.5 2V.5h7v7H8" fill="none" stroke="#111" /></svg></WindowButton>
          <WindowButton aria-label="close"><svg width="10" height="10"><path d="M0 0l10 10M10 0L0 10" stroke="#111" strokeWidth="1.2" /></svg></WindowButton>
        </WindowButtons>
      </TitleBar>
      <MenuBar>
        {MENUS.map((m) => <MenuItem key={m}>{m}</MenuItem>)}
      </MenuBar>
      <ToolBar>
        {TOOL_GROUPS.map((group) => (
          <React.Fragment key={group[0]}>
            <Grip />
            {group.map((name, i) => <Tool key={i} name={name} />)}
          </React.Fragment>
        ))}
      </ToolBar>
      <MessageArea>
        <Messages>
          <li><Bullet />A已存盘。</li>
          <li><Icon name="warning" size={14} />警告: 层显示状态未保存。</li>
          <li><Bullet />A已存盘。</li>
          <li><Bullet />基准平面将不显示。</li>
        </Messages>
        <Status><Icon name="light" /></Status>
        <FilterSelect aria-label="filter" defaultValue="智能">
          <option>智能</option>
        </FilterSelect>
      </MessageArea>

      <Workspace>
        <SidePanel>
          <PanelMain>
            <Tabs>
              <Tab $active aria-label="model tree"><Icon name="tabTree" /></Tab>
              <Tab aria-label="folders"><Icon name="tabFolders" /></Tab>
              <Tab aria-label="favorites"><Icon name="tabFav" /></Tab>
            </Tabs>
            <PanelHead>
              <h2>模型树</h2>
              <ToolButton aria-label="show"><Icon name="tools" /></ToolButton>
              <ArrowButton aria-label="more" />
              <ToolButton aria-label="settings"><Icon name="settings" /></ToolButton>
              <ArrowButton aria-label="more" />
            </PanelHead>
            <Tree>
              <Row $root><Icon name="app" size={15} />A.PRT</Row>
              {TREE.map((item, i) => (
                <Row key={i} $dim={item.dim}>
                  <Branch $last={i === TREE.length - 1} $plus={item.expand}>
                    {item.expand && <Expander aria-label={"expand " + item.label} />}
                  </Branch>
                  <Icon name={item.icon} size={16} />
                  {item.label}
                </Row>
              ))}
            </Tree>
          </PanelMain>
          <Handles>
            <Handle aria-label="collapse" />
            <Handle $on aria-label="browser" />
          </Handles>
        </SidePanel>
        <Viewport>
          <Model />
        </Viewport>
        <FeatureBar>
          {FEATURE_GROUPS.map((group) => (
            <React.Fragment key={group[0]}>
              <HGrip />
              {group.map((name) => (
                <FeatureRow key={name}>
                  <ToolButton aria-label={name}><Icon name={name} /></ToolButton>
                  {(name === "points" || name === "rib") && <FlyOut $dim={name === "rib"} aria-label="more" />}
                </FeatureRow>
              ))}
            </React.Fragment>
          ))}
        </FeatureBar>
      </Workspace>
      <TaskStrip>20:55</TaskStrip>

      <Meter />
      <Watermark>
        <svg width="62" height="62" viewBox="0 0 62 62" fill="none">
          <g opacity=".85">
            <ellipse cx="22" cy="22" rx="22" ry="14" transform="rotate(42 22 22)" stroke="#1f5582" strokeWidth="3" />
            <path d="M40 23q14-5 17 7 1 12-8 22-8 8-17 4" stroke="#a02848" strokeWidth="3.5" />
            <path d="M29 33q-14 0-18 11 0 9 18 12M22 38q2-7 11-3t10 11" stroke="#5f7886" strokeWidth="2" />
          </g>
        </svg>
        <WatermarkText>
          <strong>野火论坛</strong>
          <span>www.proewildfire.cn</span>
        </WatermarkText>
      </Watermark>
    </Page>
  </>
);

export default App;
